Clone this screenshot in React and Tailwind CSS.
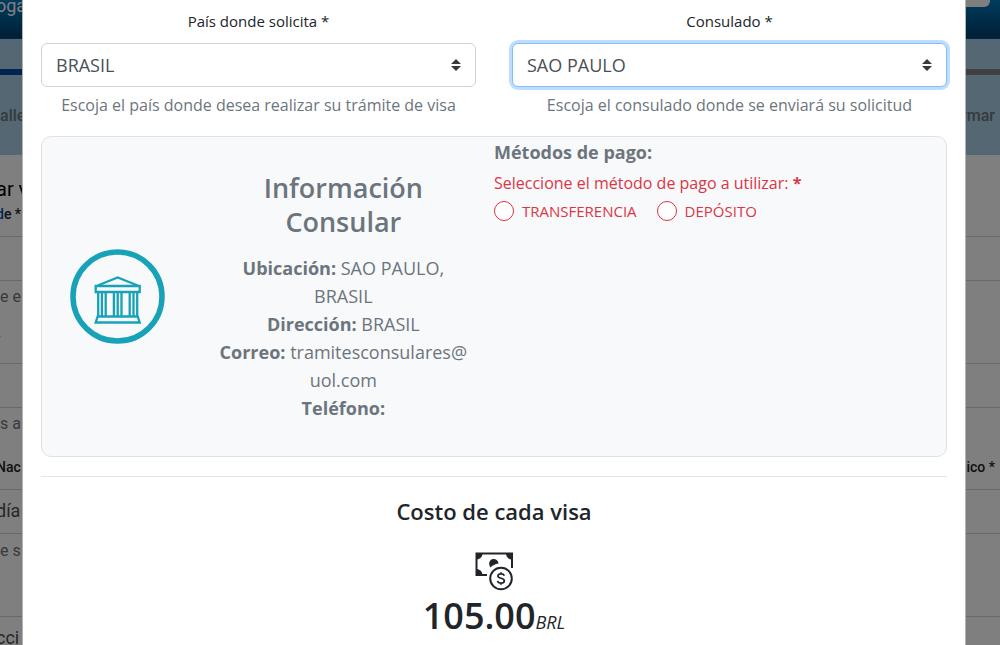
import React, { useState } from 'react';

const paymentMethods = [
  { id: 'transferencia', label: 'TRANSFERENCIA' },
  { id: 'deposito', label: 'DEPÓSITO' },
];

const consularInfo = [
  { label: 'Ubicación:', value: 'SAO PAULO, BRASIL' },
  { label: 'Dirección:', value: 'BRASIL' },
  { label: 'Correo:', value: <>tramitesconsulares@<wbr />uol.com</> },
  { label: 'Teléfono:', value: '' },
];

const BankIcon = () => (
  <svg width="96" height="96" viewBox="-1 -1 96 96" fill="none" stroke="#17a2b8" aria-hidden="true">
    <circle cx="47.5" cy="46.5" r="44.5" strokeWidth="5.5" />
    <g strokeWidth="2.3" transform="translate(0.7 -0.5)">
      <path d="M27 36L47 28L67 36" />
      <path d="M25 36.5H69V42.5H25Z" />
      <path d="M27.5 43V67M31.2 43V67M35 43V67M43.2 43V67M47 43V67M50.8 43V67M59 43V67M62.8 43V67M66.5 43V67" />
      <path d="M27 67H67L69 73H25Z" />
    </g>
  </svg>
);

const MoneyIcon = () => (
  <svg width="40" height="40" viewBox="0 0 40 40" fill="none" stroke="#212529" strokeWidth="2" aria-hidden="true">
    <path d="M13 24H2.5V2.5H38V17" />
    <path d="M2 2H8.5A6 6 0 0 1 2 8.5ZM38.5 2H32A6 6 0 0 0 38.5 8.5ZM2 24.5V18A6 6 0 0 1 8.5 24.5Z" fill="#212529" stroke="none" />
    <path d="M15.5 14.5A4.7 4.7 0 1 1 24.5 12.5C21 13 18.5 14.5 16.5 16.5Z" fill="#212529" stroke="none" />
    <circle cx="27" cy="27.5" r="10.8" />
    <path d="M30.3 24.8C29.8 23.3 28.5 22.9 27 22.9C25.2 22.9 23.9 23.8 23.9 25.1C23.9 28.2 30.3 26.3 30.3 29.7C30.3 31.2 28.9 32.1 27 32.1C25.2 32.1 23.9 31.4 23.6 29.9M27 21.3V23M27 32V33.7" strokeWidth="1.7" />
  </svg>
);

const SelectField = ({ id, label, help, value, focused }) => (
  <div className="text-center">
    <label htmlFor={id} className="block text-[15px] leading-5 text-[#212529]">{label}</label>
    <div className="relative mt-3">
      <select
        id={id}
        defaultValue={value}
        className={`block w-full h-11 appearance-none rounded-md border bg-white px-[14px] text-lg leading-6 text-[#495057] outline-none ${
          focused ? 'border-[#80bdff] ring-3 ring-[#bfdeff]' : 'border-[#ced4da]'
        }`}
      >
        <option>{value}</option>
      </select>
      <svg width="10" height="12" viewBox="0 0 10 12" fill="#343a40" className="absolute right-[15px] top-4 pointer-events-none" aria-hidden="true">
        <path d="M0 5L5 0L10 5ZM0 7L5 12L10 7Z" />
      </svg>
    </div>
    <p className="mt-[6px] text-base leading-6 text-[#6c757d]">{help}</p>
  </div>
);

/* Form that stays behind the dialog */
const BackgroundPage = () => (
  <div className="font-['Roboto',sans-serif] text-[#212529]">
    <header className="flex h-[39px] justify-between overflow-hidden border-b border-[#0046b0] bg-linear-to-b from-[#0078bc] to-[#00406c]">
      <span className="-ml-1 text-lg leading-3 text-white">oga</span>
      <span className="mr-[10px] h-[7px] w-20 rounded-b-md bg-white" />
    </header>
    <div className="h-[116px] bg-[#a8cee4] pt-[30px]">
      <div className="flex h-[6px]">
        <div className="flex-1 bg-[#004a9c]" />
        <div className="flex-1 bg-[#808080]" />
      </div>
      <div className="flex justify-between pr-[5px] pt-[29px] text-base leading-6 font-medium text-[#6c757d]">
        <span>alle</span>
        <span>rmar</span>
      </div>
    </div>
    <div className="-ml-1 pt-5">
      <h1 className="text-xl leading-7 text-black">ar v</h1>
      <p className="pt-[1px] text-sm leading-5 font-medium"><span className="text-[#0050b8]">d</span>e *</p>
      <div className="mt-3 h-[45px] border-y border-[#ced4da]" />
      <p className="mt-1 pl-1 text-base leading-6 text-[#6c757d]">e e</p>
      <p className="mt-5 text-base leading-4 text-[#0069d9]">-</p>
      <div className="mt-[18px] h-[45px] border-y border-[#ced4da]" />
      <p className="mt-1 pl-1 text-base leading-6 text-[#6c757d]">s a</p>
      <div className="mt-[21px] flex justify-between pr-[5px] text-sm leading-5 font-medium">
        <span>Nac</span>
        <span>ico *</span>
      </div>
      <div className="mt-3 h-[45px] border-y border-[#ced4da] text-lg leading-[42px] text-[#495057]">día</div>
      <p className="mt-[5px] pl-1 text-base leading-6 text-[#6c757d]">e s</p>
      <div className="mt-[53px] h-[45px] border-y border-[#ced4da] text-lg leading-[42px] text-[#495057]">cci</div>
    </div>
  </div>
);

const VisaDialog = () => {
  const [method, setMethod] = useState('');

  return (
    <div role="dialog" aria-label="Información Consular" className="absolute inset-y-0 left-[22px] right-[34px] overflow-hidden border-x border-black/30 bg-white px-[18px] pt-[11px] text-[#212529]">
      <div className="grid grid-cols-2 gap-9">
        <SelectField id="pais" label="País donde solicita *" value="BRASIL" help="Escoja el país donde desea realizar su trámite de visa" />
        <SelectField id="consulado" label="Consulado *" value="SAO PAULO" help="Escoja el consulado donde se enviará su solicitud" focused />
      </div>

      {/* Consular card */}
      <section className="mt-[19px] grid grid-cols-6 rounded-[10px] border border-[#dee2e6] bg-[#f8f9fa] text-[#6c757d]">
        <div className="flex items-center justify-center">
          <BankIcon />
        </div>
        <div className="col-span-2 px-5 py-[34px] text-center">
          <h2 className="mb-[15px] px-8 text-[27px] leading-[34px] font-semibold">Información Consular</h2>
          {consularInfo.map((item) => (
            <p key={item.label} className="text-lg leading-7">
              <b>{item.label}</b> {item.value}
            </p>
          ))}
        </div>
        <div className="col-span-3">
          <h3 className="text-lg leading-[30px] font-bold">Métodos de pago:</h3>
          <fieldset className="text-[#dc3545]">
            <legend className="text-base leading-8">Seleccione el método de pago a utilizar: <b>*</b></legend>
            <div className="flex gap-5">
              {paymentMethods.map((item) => (
                <label key={item.id} htmlFor={item.id} className="flex items-center gap-2 text-[15px] leading-6">
                  <input
                    type="radio"
                    id={item.id}
                    name="metodo"
                    checked={method === item.id}
                    onChange={() => setMethod(item.id)}
                    className="size-5 appearance-none rounded-full border border-[#dc3545] bg-white checked:border-[6px]"
                  />
                  {item.label}
                </label>
              ))}
            </div>
          </fieldset>
        </div>
      </section>

      <hr className="mt-[19px] border-[#e5e5e5]" />

      {/* Cost */}
      <section className="flex flex-col items-center pt-[19px]">
        <h2 className="text-[22px] leading-[30px] font-semibold">Costo de cada visa</h2>
        <div className="mt-[25px]">
          <MoneyIcon />
        </div>
        <p className="text-4xl leading-[50px] font-semibold">
          105.00<em className="text-lg font-normal">BRL</em>
        </p>
      </section>
    </div>
  );
};

export default function App() {
  return (
    <div className="relative h-screen overflow-hidden bg-white font-['Open_Sans','Noto_Sans',sans-serif]">
      <BackgroundPage />
      <div className="absolute inset-0 bg-black/50" />
      <VisaDialog />
    </div>
  );
}
